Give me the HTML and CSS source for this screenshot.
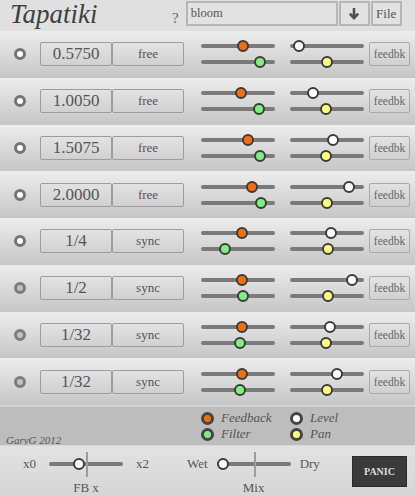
FILE: index.html
```html
<!DOCTYPE html>
<html>
<head>
<meta charset="utf-8">
<link rel="stylesheet" href="styles.css">
</head>
<body>
<div class="app">
  <header class="header">
    <h1 class="title">Tapatiki</h1>
    <span class="help">?</span>
    <div class="preset">bloom</div>
    <div class="hbtn arrow"><svg width="12" height="13" viewBox="0 0 12 13"><path d="M6 1V11M1.8 6.6L6 11L10.2 6.6" fill="none" stroke="#505050" stroke-width="2.6"/></svg></div>
    <div class="hbtn file">File</div>
  </header>

  <main class="rows">
    <div class="row">
      <span class="radio"></span><div class="val">0.5750</div><div class="mode">free</div>
      <div class="sgroup"><div class="slider"><span class="thumb orange" style="left:36px"></span></div><div class="slider"><span class="thumb green" style="left:53px"></span></div></div>
      <div class="sgroup right"><div class="slider"><span class="thumb white" style="left:3px"></span></div><div class="slider"><span class="thumb yellow" style="left:31px"></span></div></div>
      <div class="fb">feedbk</div>
    </div>
    <div class="row">
      <span class="radio"></span><div class="val">1.0050</div><div class="mode">free</div>
      <div class="sgroup"><div class="slider"><span class="thumb orange" style="left:34px"></span></div><div class="slider"><span class="thumb green" style="left:52px"></span></div></div>
      <div class="sgroup right"><div class="slider"><span class="thumb white" style="left:17px"></span></div><div class="slider"><span class="thumb yellow" style="left:30px"></span></div></div>
      <div class="fb">feedbk</div>
    </div>
    <div class="row">
      <span class="radio"></span><div class="val">1.5075</div><div class="mode">free</div>
      <div class="sgroup"><div class="slider"><span class="thumb orange" style="left:41px"></span></div><div class="slider"><span class="thumb green" style="left:53px"></span></div></div>
      <div class="sgroup right"><div class="slider"><span class="thumb white" style="left:37px"></span></div><div class="slider"><span class="thumb yellow" style="left:30px"></span></div></div>
      <div class="fb">feedbk</div>
    </div>
    <div class="row">
      <span class="radio"></span><div class="val">2.0000</div><div class="mode">free</div>
      <div class="sgroup"><div class="slider"><span class="thumb orange" style="left:45px"></span></div><div class="slider"><span class="thumb green" style="left:54px"></span></div></div>
      <div class="sgroup right"><div class="slider"><span class="thumb white" style="left:53px"></span></div><div class="slider"><span class="thumb yellow" style="left:31px"></span></div></div>
      <div class="fb">feedbk</div>
    </div>
    <div class="row">
      <span class="radio"></span><div class="val">1/4</div><div class="mode">sync</div>
      <div class="sgroup"><div class="slider"><span class="thumb orange" style="left:35px"></span></div><div class="slider"><span class="thumb green" style="left:18px"></span></div></div>
      <div class="sgroup right"><div class="slider"><span class="thumb white" style="left:35px"></span></div><div class="slider"><span class="thumb yellow" style="left:32px"></span></div></div>
      <div class="fb">feedbk</div>
    </div>
    <div class="row">
      <span class="radio off"></span><div class="val">1/2</div><div class="mode">sync</div>
      <div class="sgroup"><div class="slider"><span class="thumb orange" style="left:35px"></span></div><div class="slider"><span class="thumb green" style="left:36px"></span></div></div>
      <div class="sgroup right"><div class="slider"><span class="thumb white" style="left:56px"></span></div><div class="slider"><span class="thumb yellow" style="left:32px"></span></div></div>
      <div class="fb">feedbk</div>
    </div>
    <div class="row">
      <span class="radio off"></span><div class="val">1/32</div><div class="mode">sync</div>
      <div class="sgroup"><div class="slider"><span class="thumb orange" style="left:35px"></span></div><div class="slider"><span class="thumb green" style="left:33px"></span></div></div>
      <div class="sgroup right"><div class="slider"><span class="thumb white" style="left:34px"></span></div><div class="slider"><span class="thumb yellow" style="left:30px"></span></div></div>
      <div class="fb">feedbk</div>
    </div>
    <div class="row">
      <span class="radio off"></span><div class="val">1/32</div><div class="mode">sync</div>
      <div class="sgroup"><div class="slider"><span class="thumb orange" style="left:35px"></span></div><div class="slider"><span class="thumb green" style="left:33px"></span></div></div>
      <div class="sgroup right"><div class="slider"><span class="thumb white" style="left:41px"></span></div><div class="slider"><span class="thumb yellow" style="left:31px"></span></div></div>
      <div class="fb">feedbk</div>
    </div>
  </main>

  <section class="legend">
    <span class="credit">GaryG 2012</span>
    <div class="litem c2 r1"><span class="dot orange"></span>Feedback</div>
    <div class="litem c3 r1"><span class="dot white"></span>Level</div>
    <div class="litem c2 r2"><span class="dot green"></span>Filter</div>
    <div class="litem c3 r2"><span class="dot yellow"></span>Pan</div>
  </section>

  <footer class="footer">
    <div class="ctl fbx">
      <span class="lbl">x0</span>
      <div class="slider tick"><span class="thumb white" style="left:24px"></span></div>
      <span class="lbl">x2</span>
      <span class="caption">FB x</span>
    </div>
    <div class="ctl mix">
      <span class="lbl">Wet</span>
      <div class="slider tick"><span class="thumb white" style="left:0px"></span></div>
      <span class="lbl">Dry</span>
      <span class="caption">Mix</span>
    </div>
    <div class="panic">PANIC</div>
  </footer>
</div>
</body>
</html>
```
FILE: styles.css
```css
* { box-sizing: border-box; }

body {
  margin: 0;
  font-family: "Liberation Serif", "Times New Roman", serif;
  color: #555;
  background: #cfcfcf;
}

.app {
  width: 415px;
  height: 496px;
  display: flex;
  flex-direction: column;
  overflow: hidden;
}

/* header */
.header {
  flex: none;
  height: 31px;
  display: flex;
  align-items: flex-start;
  background: #e0e0e0;
}
.title {
  margin: 1px 0 0 10px;
  width: 162px;
  font-size: 27px;
  line-height: 27px;
  font-style: italic;
  font-weight: normal;
  color: #404040;
}
.help {
  margin-top: 11px;
  font-size: 15px;
  line-height: 15px;
  color: #666;
}
.preset {
  margin: 1px 0 0 7px;
  width: 152px;
  height: 25px;
  border: 2px solid #b6b6b6;
  padding-left: 3px;
  font-size: 12.5px;
  line-height: 21px;
  color: #555;
  background: #e2e2e2;
}
.hbtn {
  margin-top: 1px;
  height: 25px;
  border: 2px solid #b6b6b6;
  display: flex;
  align-items: center;
  justify-content: center;
  font-size: 13px;
  color: #555;
  background: #e2e2e2;
}
.arrow { margin-left: 1px; width: 31px; }
.file { margin-left: 1px; width: 31px; }

/* channel rows */
.rows {
  flex: none;
  height: 374px;
  display: flex;
  flex-direction: column;
}
.row {
  flex: 1 1 0;
  display: flex;
  align-items: center;
  padding-left: 14px;
  background: linear-gradient(#ededed, #c6c6c6);
}
.radio {
  flex: none;
  width: 12px;
  height: 12px;
  border-radius: 50%;
  border: 3px solid #747474;
  background: #fff;
}
.radio.off {
  background: #c2c2c2;
  border-color: #7c7c7c;
}
.val, .mode, .fb {
  flex: none;
  height: 24px;
  border: 1px solid #9d9d9d;
  border-radius: 2px;
  display: flex;
  align-items: center;
  justify-content: center;
  color: #555;
}
.val {
  margin-left: 14px;
  width: 72px;
  font-size: 17px;
}
.mode {
  width: 72px;
  font-size: 13px;
}
.sgroup {
  flex: none;
  margin-left: 17px;
  width: 74px;
  display: flex;
  flex-direction: column;
  gap: 2px;
}
.sgroup.right { margin-left: 15px; }
.fb {
  margin-left: 5px;
  width: 41px;
  font-size: 11.5px;
  border-color: #a9a9a9;
  color: #666;
}

/* sliders */
.slider {
  position: relative;
  width: 74px;
  height: 14px;
}
.slider::before {
  content: "";
  position: absolute;
  left: 0;
  right: 0;
  top: 5px;
  height: 4px;
  border-radius: 2px;
  background: #7a7a7a;
}
.slider.tick::after {
  content: "";
  position: absolute;
  left: 37px;
  top: -5px;
  width: 2px;
  height: 25px;
  background: #9c9c9c;
}
.thumb {
  position: absolute;
  top: 1px;
  z-index: 1;
  width: 12px;
  height: 12px;
  border-radius: 50%;
  border: 2.5px solid #3c3c3c;
}
.orange { background: #f07010; }
.green { background: #80ee80; }
.white { background: #ffffff; }
.yellow { background: #ffff80; }

/* legend */
.legend {
  flex: none;
  height: 40px;
  background: #bdbdbd;
  border-top: 2px solid #d4d4d4;
  padding-top: 3px;
  display: grid;
  grid-template-columns: 201px 89px 1fr;
  grid-template-rows: 16px 16px;
  align-content: start;
}
.credit {
  grid-column: 1;
  grid-row: 1 / 3;
  align-self: end;
  margin-bottom: -4px;
  padding-left: 6px;
  font-size: 11px;
  line-height: 12px;
  font-style: italic;
  color: #555;
}
.litem {
  display: flex;
  align-items: center;
  gap: 7px;
  font-size: 13px;
  font-style: italic;
  color: #555;
}
.c2 { grid-column: 2; }
.c3 { grid-column: 3; }
.r1 { grid-row: 1; }
.r2 { grid-row: 2; }
.dot {
  flex: none;
  width: 13px;
  height: 13px;
  border-radius: 50%;
  border: 3px solid #444;
}

/* footer */
.footer {
  flex: 1;
  display: flex;
  align-items: flex-start;
  padding: 10px 8px 0 23px;
  border-top: 1px solid #d8d8d8;
  background: linear-gradient(#e2e2e2, #d6d6d6);
}
.ctl {
  margin-top: 1px;
  display: grid;
  grid-template-columns: auto 74px auto;
  grid-template-rows: 14px auto;
  column-gap: 13px;
  align-items: center;
}
.ctl.mix {
  margin-left: 38px;
  column-gap: 9px;
}
.lbl {
  font-size: 13px;
  line-height: 14px;
  color: #555;
}
.caption {
  grid-column: 2;
  grid-row: 2;
  justify-self: center;
  margin-top: 8.5px;
  font-size: 13px;
  line-height: 15px;
  color: #555;
}
.panic {
  margin-left: auto;
  width: 55px;
  height: 31px;
  display: flex;
  align-items: center;
  justify-content: center;
  background: #3a3a3a;
  border: 1px solid #2a2a2a;
  color: #dedede;
  font-size: 10px;
  font-weight: bold;
}
```
